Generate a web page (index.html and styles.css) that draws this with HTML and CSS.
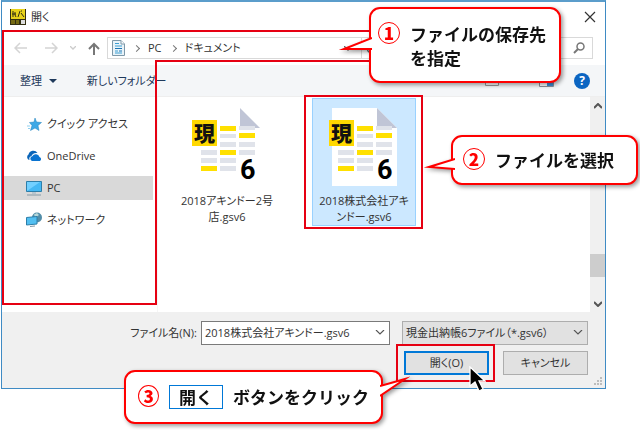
FILE: index.html
```html
<!DOCTYPE html>
<html lang="ja">
<head>
    <meta charset="UTF-8">
    <meta name="viewport" content="width=device-width, initial-scale=1.0">
    <title>開く</title>
    <link rel="stylesheet" href="styles.css">
</head>
<body>
    <div class="dialog">
        <header class="titlebar">
            <svg class="app-icon" width="16" height="16" viewBox="0 0 16 16">
                <path d="M0 0h16v16H0z" fill="#332f12"/>
                <path d="M1 0h14v10H1z" fill="#e8d21a"/>
                <path d="M3 2v6M2 5h4M5 3v3l1 2M10 2l-2 6M11 4l3 4M11 2h1" stroke="#332f12" fill="none"/>
                <path d="M1 12h4M1 14h4M6 12h3M6 14h3" stroke="#b8a615"/>
                <path d="M11 11h4v4h-4z" fill="#ddd"/>
            </svg>
            <h1 class="title">開く</h1>
            <button class="icon-btn" aria-label="閉じる">
                <svg width="12" height="12" viewBox="0 0 12 12"><path d="M1 1l10 10M11 1L1 11" stroke="#333" stroke-width="1.2"/></svg>
            </button>
        </header>

        <nav class="navbar">
            <button class="icon-btn" aria-label="戻る">
                <svg width="14" height="12" viewBox="0 0 14 12"><path d="M13 6H2M6 1L1 6l5 5" stroke="#d4d4d4" stroke-width="1.5" fill="none"/></svg>
            </button>
            <button class="icon-btn forward" aria-label="進む">
                <svg width="14" height="12" viewBox="0 0 14 12"><path d="M1 6h11M8 1l5 5-5 5" stroke="#d4d4d4" stroke-width="1.5" fill="none"/></svg>
            </button>
            <button class="icon-btn recent" aria-label="最近表示した場所">
                <svg width="6" height="4" viewBox="0 0 6 4"><path d="M0 0l3 3 3-3" stroke="#ccc" stroke-width="1.3" fill="none"/></svg>
            </button>
            <button class="icon-btn" aria-label="上へ">
                <svg width="12" height="13" viewBox="0 0 12 13"><path d="M6 13V2M1 7l5-5 5 5" stroke="#777" stroke-width="2" fill="none"/></svg>
            </button>
            <div class="address">
                <svg width="13" height="16" viewBox="0 0 13 16">
                    <path d="M.5 .5h8.500l3.500 3.500v11.500H.5z" fill="#e9f3f9" stroke="#7e98a8"/>
                    <path d="M9 .5V4h3.500" fill="#fff" stroke="#7e98a8"/>
                    <path d="M3 3.500h4M3 6h7M3 11h3M3 13h7" stroke="#3d9fd2"/>
                    <path d="M3 8.500h7M7 11h3" stroke="#1b75b4"/>
                </svg>
                <span class="sep"></span>
                <a href="#pc">PC</a>
                <span class="sep"></span>
                <a href="#documents">ドキュメント</a>
                <button class="icon-btn drop" aria-label="以前の場所">
                    <svg width="8" height="5" viewBox="0 0 8 5"><path d="M0 0l4 4 4-4" stroke="#666" stroke-width="1.3" fill="none"/></svg>
                </button>
                <button class="icon-btn refresh" aria-label="更新">
                    <svg width="12" height="12" viewBox="0 0 12 12"><path d="M10 3a5 5 0 1 0 1 4M10 0v4H6" stroke="#666" stroke-width="1.3" fill="none"/></svg>
                </button>
            </div>
            <div class="search">
                <input type="search" aria-label="ドキュメントの検索">
                <svg width="12" height="12" viewBox="0 0 12 12"><circle cx="7.500" cy="4.500" r="3.500" stroke="#777" stroke-width="1.5" fill="none"/><path d="M5 7L1 11" stroke="#777" stroke-width="2"/></svg>
            </div>
        </nav>

        <div class="toolbar">
            <button class="tool">整理 <span class="caret"></span></button>
            <button class="tool">新しいフォルダー</button>
            <button class="icon-btn view" aria-label="表示方法">
                <svg width="14" height="11" viewBox="0 0 14 11"><path d="M.5 .5h13v10H.5z" fill="#fff" stroke="#999"/></svg>
            </button>
            <button class="icon-btn preview" aria-label="プレビュー">
                <svg width="15" height="12" viewBox="0 0 15 12"><path d="M.5 .5h14v11H.5z" fill="#fff" stroke="#8a9199"/><path d="M8 3h6v8H8z" fill="#3f8fd8"/></svg>
            </button>
            <button class="icon-btn help" aria-label="ヘルプ">?</button>
        </div>

        <main class="content">
            <ul class="places">
                <li><a href="#quick">
                    <svg width="16" height="16" viewBox="0 0 16 16"><path d="M9 2l1.500 4 5 .5-3.500 3 1 5-4-2.500-4.500 2.500 1.500-5-2.500-3 4.500-.5z" fill="#3fa9e6" stroke="#2383bd" stroke-width=".5"/><path d="M1 10h3M2 12.500h2" stroke="#8fd0f0"/></svg>
                    クイック アクセス</a></li>
                <li><a href="#onedrive">
                    <svg width="16" height="16" viewBox="0 0 16 16"><path d="M3 12a3.200 3.200 0 0 1-.5-5.500A5 5 0 0 1 11.500 5C8 4.500 6 6 5.500 8 3.500 8.500 3 10 3.500 12z" fill="#0a64b8"/><path d="M6 13a2.500 2.500 0 0 1 .3-4.800A4 4 0 0 1 13.500 9a2.200 2.200 0 0 1 .5 4z" fill="#0a73d0"/></svg>
                    OneDrive</a></li>
                <li><a href="#pc" class="current">
                    <svg width="16" height="16" viewBox="0 0 16 16"><path d="M.5 1.500h15v10H.5z" fill="#44b8f4" stroke="#2d7ea9"/><path d="M1 11L14 2H1z" fill="#72d0ff"/><path d="M6 12h4v2H6z" fill="#b8c6cf"/><path d="M1 15h14" stroke="#8499a5"/></svg>
                    PC</a></li>
                <li><a href="#network">
                    <svg width="16" height="16" viewBox="0 0 16 16"><circle cx="11" cy="5.500" r="5" fill="#528da8"/><path d="M8 2.500l3-1.500 2 2-2 1.500-2 1z" fill="#b8d8d9"/><path d="M.5 5.500l10.500-1v7.500l-10.500 1z" fill="#52bff1" stroke="#2d7ea9"/><path d="M4 14.500l5-.5" stroke="#8499a5"/></svg>
                    ネットワーク</a></li>
            </ul>
            <div class="files">
                <button class="file">
                    <svg width="72" height="80" viewBox="0 0 72 80">
                        <path d="M4 0H49L69 20V78H4Z" fill="#fff"/>
                        <path d="M49 0L69 20H49Z" fill="#c0c5d6"/>
                        <path d="M29 26h16v4H29zM48 18h16v4H48zM29 34h16v5H29zM48 34h16v5H48zM10 42h16v5H10zM48 42h16v5H48zM10 50h16v5H10zM29 50h16v5H29zM29 58h16v5H29z" fill="#e0e3ea"/>
                        <path d="M29 18h16v5H29zM48 25h16v5H48zM29 42h16v5H29zM10 58h16v5H10z" fill="#ffe000"/>
                        <path d="M1 12h25v26H1z" fill="#ffd800"/>
                        <text x="3" y="33" class="icon-kanji">現</text>
                        <text x="49" y="71" class="icon-six">6</text>
                    </svg>
                    <span>2018アキンドー2号<br>店.gsv6</span>
                </button>
                <button class="file selected">
                    <svg width="72" height="80" viewBox="0 0 72 80">
                        <path d="M4 0H49L69 20V78H4Z" fill="#fff"/>
                        <path d="M49 0L69 20H49Z" fill="#c0c5d6"/>
                        <path d="M29 26h16v4H29zM48 18h16v4H48zM29 34h16v5H29zM48 34h16v5H48zM10 42h16v5H10zM48 42h16v5H48zM10 50h16v5H10zM29 50h16v5H29zM29 58h16v5H29z" fill="#e0e3ea"/>
                        <path d="M29 18h16v5H29zM48 25h16v5H48zM29 42h16v5H29zM10 58h16v5H10z" fill="#ffe000"/>
                        <path d="M1 12h25v26H1z" fill="#ffd800"/>
                        <text x="3" y="33" class="icon-kanji">現</text>
                        <text x="49" y="71" class="icon-six">6</text>
                    </svg>
                    <span>2018株式会社アキ<br>ンドー.gsv6</span>
                </button>
            </div>
            <div class="scrollbar">
                <svg width="8" height="6" viewBox="0 0 8 6"><path d="M0 5l4-4 4 4" stroke="#555" stroke-width="2" fill="none"/></svg>
                <span class="thumb"></span>
                <svg width="8" height="6" viewBox="0 0 8 6"><path d="M0 1l4 4 4-4" stroke="#555" stroke-width="2" fill="none"/></svg>
            </div>
        </main>

        <form class="footer">
            <div class="row">
                <label for="filename">ファイル名(N):</label>
                <div class="combo">
                    <input type="text" id="filename" value="2018株式会社アキンドー.gsv6">
                    <svg width="10" height="6" viewBox="0 0 10 6"><path d="M1 0l4 4 4-4" stroke="#555" stroke-width="1.2" fill="none"/></svg>
                </div>
                <div class="combo filter">
                    <select aria-label="ファイルの種類">
                        <option>現金出納帳6ファイル（*.gsv6）</option>
                    </select>
                    <svg width="10" height="6" viewBox="0 0 10 6"><path d="M1 0l4 4 4-4" stroke="#555" stroke-width="1.2" fill="none"/></svg>
                </div>
            </div>
            <div class="row actions">
                <button type="button" class="btn primary">開く(O)</button>
                <button type="button" class="btn">キャンセル</button>
            </div>
            <svg class="grip" width="9" height="9" viewBox="0 0 9 9"><path d="M7 0h2v2H7zM7 3h2v2H7zM7 6h2v2H7zM4 3h2v2H4zM4 6h2v2H4zM1 6h2v2H1z" fill="#bdbdbd"/></svg>
        </form>
    </div>

    <!-- red frames -->
    <svg class="frame-path" width="400" height="276" viewBox="0 0 400 276"><path d="M1 1H399V31H154V274H1Z" fill="none" stroke="#e60012" stroke-width="2"/></svg>
    <div class="frame frame-file"></div>
    <div class="frame frame-open"></div>

    <div class="callout callout-1">
        <svg class="tail" width="36" height="18" viewBox="0 0 36 18"><path d="M36 2L8 13 36 13" fill="#fff" stroke="#f00" stroke-width="2"/></svg>
        <span class="num">1</span>
        <p>ファイルの保存先<br>を指定</p>
    </div>
    <div class="callout callout-2">
        <svg class="tail" width="33" height="14" viewBox="0 0 33 14"><path d="M33 2L7 10 33 12" fill="#fff" stroke="#f00" stroke-width="2"/></svg>
        <span class="num">2</span>
        <p>ファイルを選択</p>
    </div>
    <div class="callout callout-3">
        <svg class="tail" width="30" height="24" viewBox="0 0 30 24"><path d="M0 10L25 3 0 20" fill="#fff" stroke="#f00" stroke-width="2"/></svg>
        <span class="num">3</span>
        <span class="key">開く</span>
        <p>ボタンをクリック</p>
    </div>

    <svg class="cursor" width="17" height="26" viewBox="0 0 17 26"><path d="M1 1V20L6 16L10 25L14 23L10 15H16Z" fill="#000" stroke="#fff" stroke-width="1.300"/></svg>
</body>
</html>
```

FILE: styles.css
```css
* {
    box-sizing: border-box;
}
body {
    margin: 0;
    background: #fff;
    color: #333;
    font-family: "Open Sans", "Noto Sans CJK JP", sans-serif;
    font-size: 11px;
    line-height: 16px;
    font-feature-settings: "palt";
}
a {
    color: inherit;
    text-decoration: none;
}
button, input, select {
    font: inherit;
    font-feature-settings: inherit;
    color: inherit;
}
svg {
    flex: none;
}
.dialog {
    margin: 0 34px 0 1px;
    border: 1px solid #3f8bc4;
    border-top: 2px solid #5b9dcb;
    background: #fff;
}
.icon-btn {
    display: flex;
    padding: 0;
    border: 0;
    background: none;
}
.titlebar {
    display: flex;
    align-items: center;
    gap: 5px;
    height: 29px;
    padding: 0 9px 0 8px;
}
.title {
    flex: 1;
    margin: 0;
    font-size: 11px;
    font-weight: normal;
}

/* navigation row */
.navbar {
    display: flex;
    align-items: center;
    height: 34px;
    padding: 0 12px;
}
.forward {
    margin-left: 16px;
}
.recent {
    margin: 0 12px 0 12px;
}
.address {
    flex: 1;
    display: flex;
    align-items: center;
    gap: 9px;
    height: 22px;
    margin-left: 7px;
    padding-left: 4px;
    border: 1px solid #d9d9d9;
}
.sep {
    width: 5px;
    height: 5px;
    border: solid #777;
    border-width: 1px 1px 0 0;
    transform: rotate(45deg);
}
.drop {
    margin-left: auto;
}
.refresh {
    padding: 4px;
    border-left: 1px solid #d9d9d9;
}
.search {
    display: flex;
    align-items: center;
    width: 202px;
    height: 22px;
    margin-left: 8px;
    padding-right: 7px;
    border: 1px solid #d9d9d9;
}
.search input {
    flex: 1;
    min-width: 0;
    border: 0;
    outline: 0;
}

.toolbar {
    display: flex;
    align-items: center;
    height: 32px;
    padding: 0 15px 0 18px;
    background: #f4f6f8;
    border-bottom: 1px solid #eee;
}
.tool {
    margin-right: 30px;
    padding: 0;
    border: 0;
    background: none;
    color: #1e395b;
}
.caret {
    display: inline-block;
    margin: 0 0 2px 4px;
    border: 4px solid transparent;
    border-top-color: #1e395b;
    border-bottom: 0;
}
.view {
    margin-left: auto;
    margin-right: 40px;
}
.preview {
    margin-right: 20px;
}
.help {
    justify-content: center;
    width: 16px;
    height: 16px;
    border-radius: 50%;
    background: #0b65c2;
    color: #fff;
    font-size: 12px;
    font-weight: bold;
}

/* places, files, scrollbar */
.content {
    display: flex;
    height: 215px;
}
.places {
    display: flex;
    flex-direction: column;
    gap: 8px;
    width: 156px;
    margin: 0;
    padding: 15px 4px 0 2px;
    border-right: 1px solid #f5f5f5;
    list-style: none;
}
.places a {
    display: flex;
    align-items: center;
    gap: 5px;
    height: 24px;
    padding-left: 22px;
}
.places .current {
    background: #d9d9d9;
}
.files {
    flex: 1;
    display: flex;
    align-items: flex-start;
    gap: 33px;
    padding: 1px 0 0 17px;
}
.file {
    display: flex;
    flex-direction: column;
    align-items: center;
    gap: 5px;
    width: 104px;
    height: 128px;
    padding: 9px 0 0;
    border: 1px solid transparent;
    background: none;
    white-space: nowrap;
}
.file.selected {
    background: #cce8ff;
    border-color: #99d1ff;
}
.icon-kanji {
    font: 900 21px "Noto Sans CJK JP", sans-serif;
    fill: #111;
}
.icon-six {
    font: bold 27px Roboto, sans-serif;
    fill: #000;
}
.scrollbar {
    display: flex;
    flex-direction: column;
    align-items: center;
    width: 15px;
    padding: 6px 0 5px;
    background: #f0f0f0;
}
.thumb {
    width: 100%;
    height: 23px;
    margin: auto 0 24px;
    background: #cdcdcd;
}

.footer {
    position: relative;
    display: flex;
    flex-direction: column;
    gap: 6px;
    padding: 9px 17px 13px 10px;
    background: #f0f0f0;
}
.row {
    display: flex;
    align-items: center;
    justify-content: flex-end;
}
.combo {
    display: flex;
    align-items: center;
    width: 189px;
    height: 24px;
    margin: 0 12px 0 4px;
    padding: 0 4px 0 3px;
    border: 1px solid #7a7a7a;
    background: #fff;
}
.combo input, .combo select {
    flex: 1;
    min-width: 0;
    padding: 0;
    border: 0;
    outline: 0;
    background: none;
    appearance: none;
}
.filter {
    width: 186px;
    margin: 0;
    border-color: #adadad;
    background: #e1e1e1;
}
.actions {
    gap: 14px;
}
.btn {
    width: 85px;
    height: 24px;
    padding: 0;
    border: 1px solid #adadad;
    background: #e1e1e1;
}
.primary {
    border: 2px solid #0078d7;
}
.grip {
    position: absolute;
    right: 3px;
    bottom: 2px;
}

/* annotations over the dialog */
.frame-path {
    position: absolute;
    left: 2px;
    top: 30px;
}
.frame {
    position: absolute;
    border: 2px solid #e60012;
}
.frame-file {
    left: 304px;
    top: 95px;
    width: 119px;
    height: 134px;
}
.frame-open {
    left: 396px;
    top: 344px;
    width: 99px;
    height: 38px;
}
.callout {
    position: absolute;
    display: flex;
    gap: 10px;
    border: 2px solid #f00;
    border-radius: 11px;
    background: #fff;
    color: #111;
    font-family: "Noto Sans CJK JP", sans-serif;
    font-size: 17px;
    font-weight: bold;
    line-height: 24px;
    font-feature-settings: normal;
    white-space: nowrap;
    filter: drop-shadow(2px 2px 2px rgba(0, 0, 0, 0.4));
}
.callout p {
    margin: 0;
}
.callout-1 {
    left: 369px;
    top: 7px;
    width: 192px;
    height: 76px;
    padding: 13px 7px;
}
.callout-2 {
    left: 451px;
    top: 135px;
    width: 187px;
    height: 50px;
    padding: 11px 10px;
}
.callout-3 {
    left: 124px;
    top: 370px;
    width: 259px;
    height: 54px;
    padding: 13px 12px;
}
.num {
    width: 22px;
    height: 22px;
    border: 1px solid #f00;
    border-radius: 50%;
    color: #f00;
    font-size: 17px;
    font-weight: 900;
    line-height: 20px;
    text-align: center;
}
.key {
    width: 56px;
    height: 24px;
    border: 1px solid #0078d7;
    line-height: 22px;
    text-align: center;
}
.tail {
    position: absolute;
    stroke-miterlimit: 10;
}
.callout-1 .tail {
    left: -35px;
    top: 27px;
}
.callout-2 .tail {
    left: -31px;
    top: 20px;
}
.callout-3 .tail {
    right: -29px;
    top: 4px;
}
.cursor {
    position: absolute;
    left: 469px;
    top: 366px;
}
```
